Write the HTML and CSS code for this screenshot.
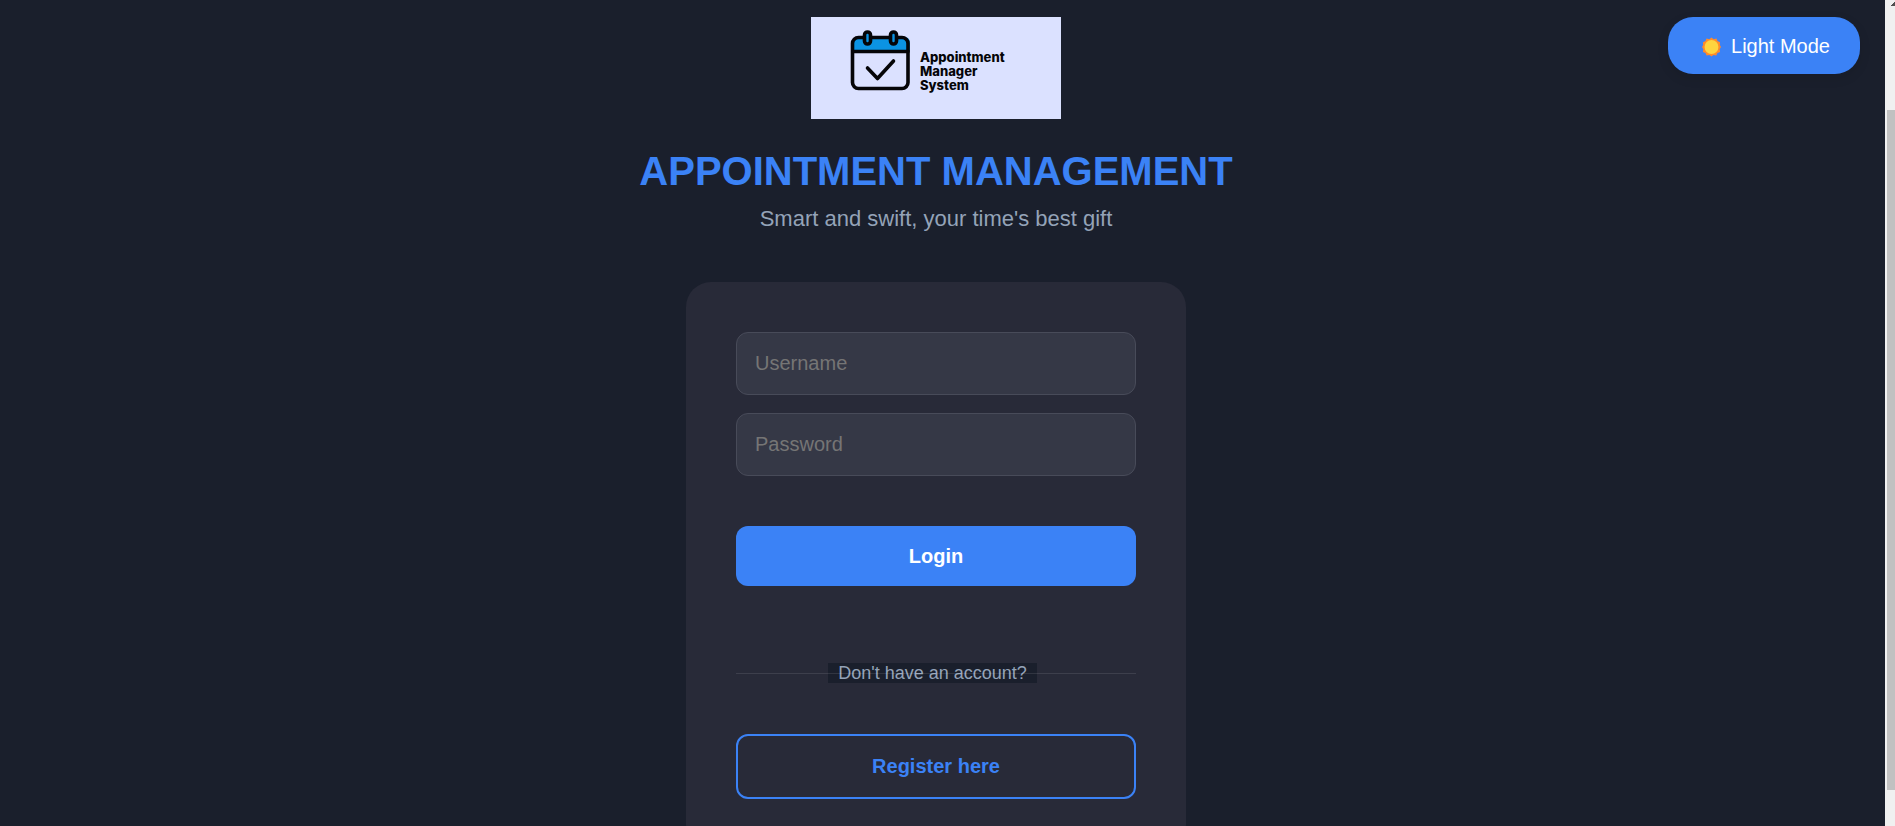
FILE: index.html
```html
<!DOCTYPE html>
<html lang="en">
<head>
<meta charset="utf-8">
<title>Appointment Management</title>
<link rel="stylesheet" href="styles.css">
</head>
<body>
<div class="shell">
  <main class="page">
    <svg class="logo" viewBox="0 0 250 102" role="img" aria-label="Appointment Manager System">
      <rect width="250" height="102" fill="#dbe1ff"/>
      <path d="M42 34V26q0-6 6-6h45q6 0 6 6v8z" fill="#0b93e3"/>
      <g fill="none" stroke="#050508" stroke-width="3.600" stroke-linecap="round" stroke-linejoin="round">
        <rect x="41.500" y="20.500" width="55.500" height="51" rx="6"/>
        <path d="M42 34.500h55M56.500 51l10 10.500L82.500 44"/>
        <rect x="53.500" y="15" width="6" height="12" rx="3" fill="#0b93e3"/>
        <rect x="79.500" y="15" width="6" height="12" rx="3" fill="#0b93e3"/>
      </g>
      <g class="logo-text">
        <text x="109" y="45">Appointment</text>
        <text x="109" y="59">Manager</text>
        <text x="109" y="73">System</text>
      </g>
    </svg>
    <h1 class="title">APPOINTMENT MANAGEMENT</h1>
    <p class="tagline">Smart and swift, your time's best gift</p>
    <form class="card">
      <div class="fields">
        <input class="field" type="text" placeholder="Username" aria-label="Username">
        <input class="field" type="password" placeholder="Password" aria-label="Password">
      </div>
      <button class="button login" type="submit">Login</button>
      <div class="divider"><span class="divider-label">Don't have an account?</span></div>
      <a class="button register" href="#register">Register here</a>
    </form>
    <button class="theme" type="button">
      <svg class="sun" viewBox="0 0 20 20" aria-hidden="true">
        <path d="M10 0l2.300 1.800 2.900-.7 1.100 2.700 2.700 1.100-.2 2.900L20 10l-1.400 2.300.4 2.900-2.700 1.100-1.300 2.600-2.900-.6L10 20l-2.300-1.700-2.900.6-1.100-2.600L1 15.200l.4-2.900L0 10l1.200-2.200L1 4.900l2.700-1.100 1.100-2.700 2.900.7z" fill="#ff8b2b"/>
        <circle cx="10" cy="10" r="7.300" fill="#ffd43f"/>
      </svg>
      Light Mode
    </button>
  </main>
  <div class="scrollbar" aria-hidden="true">
    <div class="arrow"></div>
    <div class="thumb"></div>
  </div>
</div>
</body>
</html>
```
FILE: styles.css
```css
* { box-sizing: border-box; }
body {
  margin: 0;
  background: #1a1f2c;
  font-family: "Liberation Sans", Arial, sans-serif;
  font-size: 20px;
}
.shell { display: flex; height: 100vh; overflow: hidden; }
.page {
  position: relative;
  flex: 1;
  display: flex;
  flex-direction: column;
  align-items: center;
  padding: 17px 13px 0 0;
}
.page > * { flex-shrink: 0; }
.logo { display: block; width: 250px; }
.logo-text { font: 800 13px Inter, sans-serif; fill: #050508; }
.title {
  margin: 28px 0 0;
  font-size: 40px;
  line-height: 48px;
  color: #3b82f6;
}
.tagline {
  margin: 10px 0 0;
  font-size: 22px;
  line-height: 28px;
  color: #94a3b8;
}
.card {
  width: 500px;
  max-width: 100%;
  margin-top: 49px;
  padding: 50px;
  border-radius: 25px;
  background: #282a38;
}
.fields { display: flex; flex-direction: column; gap: 18px; }
.field {
  width: 100%;
  height: 63px;
  padding: 0 18px;
  border: 1px solid #484b59;
  border-radius: 12px;
  background: #353846;
  color: #fff;
  font: inherit;
}
.field::placeholder { color: #757575; }
.button {
  display: block;
  width: 100%;
  border-radius: 12px;
  font: bold 20px/24px "Liberation Sans", Arial, sans-serif;
  text-align: center;
  text-decoration: none;
}
.login {
  margin-top: 50px;
  padding: 18px;
  border: 0;
  background: #3b82f6;
  color: #fff;
}
.divider {
  position: relative;
  display: flex;
  justify-content: center;
  margin: 77px 0 51px;
  padding-right: 7px;
}
.divider::after {
  content: "";
  position: absolute;
  top: 50%;
  left: 0;
  right: 0;
  height: 1px;
  background: rgba(255, 255, 255, 0.1);
}
.divider-label {
  padding: 0 10px;
  background: #1a1f2c;
  color: #94a3b8;
  font-size: 18px;
  line-height: 20px;
}
.register {
  padding: 18px;
  border: 2px solid #3b82f6;
  color: #3b82f6;
  line-height: 25px;
}
.theme {
  position: absolute;
  top: 17px;
  right: 25px;
  display: flex;
  align-items: center;
  gap: 10px;
  padding: 17px 30px 15px 34px;
  border: 0;
  border-radius: 25px;
  background: #3b82f6;
  box-shadow: 0 4px 12px rgba(0, 0, 0, 0.1);
  color: #fff;
  font: 20px/25px "Liberation Sans", Arial, sans-serif;
}
.sun { width: 19px; height: 20px; }
.scrollbar {
  display: flex;
  flex-direction: column;
  width: 10px;
  padding-left: 2px;
  background: #f0f0f0;
}
.arrow {
  height: 110px;
  background: linear-gradient(135deg, transparent 50%, #505050 50%) right 0 top 2px / 4px 4px no-repeat;
}
.thumb { height: calc(100% - 146px); background: #c1c1c1; }
```
